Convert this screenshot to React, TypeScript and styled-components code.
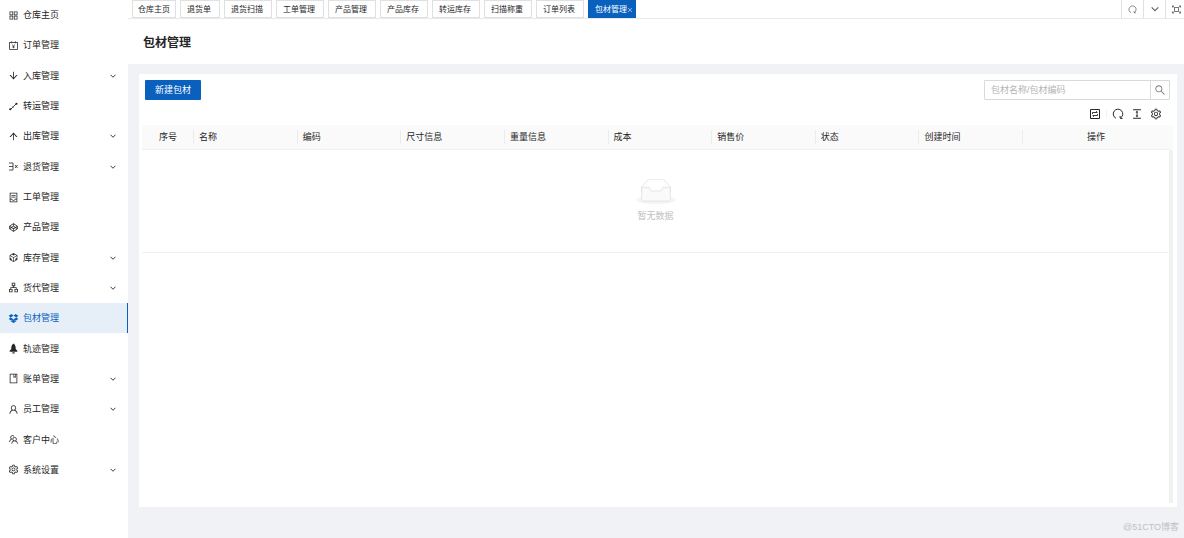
import React from "react";
import styled, { createGlobalStyle, css } from "styled-components";
import {
  AiOutlineAppstore, AiOutlineAccountBook, AiOutlineArrowDown, AiOutlineArrowUp,
  AiOutlineContainer, AiOutlineCodepen, AiOutlineCodeSandbox, AiOutlineApartment,
  AiOutlineDropbox, AiOutlineBook, AiOutlineUser, AiOutlineTeam, AiOutlineSetting,
  AiOutlineSearch, AiOutlineColumnHeight, AiOutlineClose,
} from "react-icons/ai";

const Global = createGlobalStyle`
  *, *::before, *::after { box-sizing: border-box; }
  body { margin: 0; background: #f0f2f5; color: #262626; }
  body, button, input { font-family: "Liberation Sans", "Noto Sans CJK SC", sans-serif; font-size: 9px; line-height: 14px; }
  h1, ul { margin: 0; padding: 0; }
  button { margin: 0; padding: 0; border: 0; background: none; color: inherit; cursor: pointer; }
  svg { display: block; flex: none; }
`;

const Shell = styled.div`
  display: grid;
  grid-template-columns: 128px minmax(0, 1fr);
  min-height: 100vh;
`;

const Sidebar = styled.nav`
  background: #fff;
  padding-bottom: 53px;
  display: flex;
`;

const Menu = styled.ul`
  flex: 1;
  list-style: none;
  display: grid;
  grid-auto-rows: minmax(30px, 1fr);
`;

const MenuItem = styled.li`
  display: grid;
`;

const MenuLink = styled.a<{ $active?: boolean }>`
  display: flex;
  align-items: center;
  gap: 4px;
  padding: 0 12px 0 8px;
  color: #262626;
  text-decoration: none;
  ${(p) => p.$active && css`
    color: #0960bd;
    background: #e6eff8;
    box-shadow: inset -1px 0 #0960bd;
  `}
`;

const MenuText = styled.span`
  flex: 1;
`;

const Main = styled.main`
  display: flex;
  flex-direction: column;
  min-width: 0;
`;

const TabBar = styled.div`
  display: flex;
  justify-content: space-between;
  height: 19px;
  background: #fff;
  border-bottom: 1px solid #e8e9eb;
`;

const Tabs = styled.div`
  display: flex;
  gap: 4px;
  padding-left: 4px;
`;

const Tab = styled.button<{ $home?: boolean; $active?: boolean }>`
  display: flex;
  align-items: center;
  height: 18px;
  padding: ${(p) => (p.$home ? "1px 5px 0" : "1px 8px 0 6px")};
  border: 1px solid #dfe0e2;
  font-size: 8px;
  line-height: 14px;
  white-space: nowrap;
  ${(p) => p.$active && css`
    padding-right: 2px;
    color: #fff;
    background: #0960bd;
    border-color: #0960bd;
  `}
`;

const TabActions = styled.div`
  display: flex;
  overflow: hidden;
`;

const TabAction = styled.button`
  display: grid;
  place-items: center;
  width: 22px;
  height: 18px;
  border-left: 1px solid #dfe0e2;
  color: #666;
  &:last-child { width: 19px; padding-left: 3px; }
`;

const PageHeader = styled.header`
  padding: 15px 15px 12px;
  background: #fff;
`;

const Title = styled.h1`
  font-size: 12px;
  line-height: 18px;
  font-weight: 700;
`;

const Panel = styled.section`
  flex: 1;
  display: flex;
  flex-direction: column;
  margin: 10px 7px 0 11px;
  padding: 6px 4px 4px 3px;
  background: #fff;
`;

const Toolbar = styled.div`
  display: flex;
  justify-content: space-between;
  padding: 0 3px;
`;

const PrimaryButton = styled.button`
  height: 20px;
  padding: 0 10px;
  color: #fff;
  background: #0960bd;
  border-radius: 1px;
`;

const Search = styled.form`
  display: flex;
  width: 186px;
  height: 20px;
  border: 1px solid #d9d9d9;
  border-radius: 1px;
`;

const SearchInput = styled.input`
  flex: 1;
  min-width: 0;
  padding: 0 6px;
  border: 0;
  outline: 0;
  &::placeholder { color: #b4b4b4; opacity: 1; }
`;

const SearchButton = styled.button`
  display: grid;
  place-items: center;
  width: 19px;
  border-left: 1px solid #d9d9d9;
  color: #777;
`;

const TableTools = styled.div`
  display: flex;
  justify-content: flex-end;
  align-items: center;
  gap: 7px;
  height: 25px;
  padding: 2px 11px 0 0;
`;

const ToolDivider = styled.span`
  width: 1px;
  height: 8px;
  margin: 0 -2px;
  background: #f0f0f0;
`;

const TableHead = styled.div`
  padding-right: 4px;
  background: #fafafa;
`;

const DataTable = styled.table`
  width: 100%;
  table-layout: fixed;
  border-collapse: collapse;
`;

const HeadCell = styled.th<{ $width?: string; $center?: boolean }>`
  position: relative;
  width: ${(p) => p.$width ?? "auto"};
  height: 24px;
  padding: 0 5px;
  font-weight: 400;
  text-align: ${(p) => (p.$center ? "center" : "left")};
  border-bottom: 1px solid #f0f0f0;
  &:not(:last-child)::after {
    content: "";
    position: absolute;
    top: 5px;
    bottom: 5px;
    right: 0;
    width: 1px;
    background: #ececec;
  }
`;

const TableBody = styled.div`
  flex: 1;
  border-right: 4px solid #f1f1f1;
`;

const Empty = styled.div`
  display: flex;
  flex-direction: column;
  align-items: center;
  gap: 4px;
  padding: 29px 0;
  color: #bfbfbf;
  border-bottom: 1px solid #f0f0f0;
`;

const Footer = styled.footer`
  padding: 13px 5px 4px;
  text-align: right;
  color: #bfc0c3;
`;

const ChevronIcon = ({ size = 6 }: { size?: number }) => (
  <svg width={size} height={size} viewBox="0 0 12 12" fill="none" stroke="currentColor" strokeWidth="1.8">
    <path d="m1 3.5 5 5 5-5" />
  </svg>
);

const TransferIcon = () => (
  <svg width="11" height="11" viewBox="0 0 22 22" fill="none" stroke="currentColor" strokeWidth="1.8">
    <path d="M5 17 9 13M11 11l6-6" />
    <circle cx="4.5" cy="16.5" r="2.2" fill="currentColor" stroke="none" />
    <circle cx="10" cy="12" r="1.6" fill="currentColor" stroke="none" />
    <circle cx="17" cy="5.5" r="2.2" fill="currentColor" stroke="none" />
  </svg>
);

const ReturnIcon = () => (
  <svg width="11" height="11" viewBox="0 0 22 22" fill="none" stroke="currentColor" strokeWidth="1.6">
    <path d="M2 4h8v14H2M2 11h8M14 8l5 6M19 8l-5 6" />
  </svg>
);

const TrackIcon = () => (
  <svg width="11" height="11" viewBox="0 0 20 20" fill="currentColor">
    <path d="M10 1c3 2 4 5 4 8v2l3 3v2H3v-2l3-3V9c0-3 1-6 4-8ZM8 17h4v2H8Z" />
  </svg>
);

const FullIcon = () => (
  <svg width="9" height="9" viewBox="0 0 18 18" fill="none" stroke="currentColor" strokeWidth="1.8">
    <path d="M5 5h8v8H5ZM1 5V2h3M14 2h3v3M17 13v3h-3M4 16H1v-3M1 2l4 3M17 2l-4 3M17 16l-4-3M1 16l4-3" />
  </svg>
);

const RedoIcon = ({ size }: { size: number }) => (
  <svg width={size} height={size} viewBox="0 0 24 24" fill="none" stroke="currentColor" strokeWidth="2">
    <path d="M8 20.5A9.5 9.5 0 1 1 17 20" />
    <path d="m16 16 .5 4.5 4.500.5" />
  </svg>
);

const LoopIcon = () => (
  <svg width="12" height="12" viewBox="0 0 24 24" fill="none" stroke="currentColor" strokeWidth="2">
    <path d="M3 3h18v18H3Z" />
    <path d="M7 12V9h9M14 6.500 17 9M17 12v3H8M10 17.500 7 15" strokeWidth="1.8" />
  </svg>
);

const EmptyIcon = () => (
  <svg width="40" height="26" viewBox="0 0 64 41">
    <ellipse cx="32" cy="33" rx="32" ry="7" fill="#f5f5f5" />
    <g stroke="#d9d9d9" fillRule="nonzero">
      <path d="M55 12.76 44.854 1.258C44.367.474 43.656 0 42.907 0H21.093c-.749 0-1.46.474-1.947 1.257L9 12.761V22h46v-9.24z" fill="#fff" />
      <path d="M41.613 15.931c0-1.605.994-2.93 2.227-2.931H55v18.137C55 33.26 53.68 35 52.05 35h-40.1C10.32 35 9 33.259 9 31.137V13h11.16c1.233 0 2.227 1.323 2.227 2.928v.022c0 1.605 1.005 2.901 2.237 2.901h14.752c1.232 0 2.237-1.308 2.237-2.913v-.007z" fill="#fafafa" />
    </g>
  </svg>
);

type Entry = { label: string; Icon: React.ComponentType<{ size?: number }>; sub?: boolean };

const menu: Entry[] = [
  { label: "仓库主页", Icon: AiOutlineAppstore },
  { label: "订单管理", Icon: AiOutlineAccountBook },
  { label: "入库管理", Icon: AiOutlineArrowDown, sub: true },
  { label: "转运管理", Icon: TransferIcon },
  { label: "出库管理", Icon: AiOutlineArrowUp, sub: true },
  { label: "退货管理", Icon: ReturnIcon, sub: true },
  { label: "工单管理", Icon: AiOutlineContainer },
  { label: "产品管理", Icon: AiOutlineCodepen },
  { label: "库存管理", Icon: AiOutlineCodeSandbox, sub: true },
  { label: "货代管理", Icon: AiOutlineApartment, sub: true },
  { label: "包材管理", Icon: AiOutlineDropbox },
  { label: "轨迹管理", Icon: TrackIcon },
  { label: "账单管理", Icon: AiOutlineBook, sub: true },
  { label: "员工管理", Icon: AiOutlineUser, sub: true },
  { label: "客户中心", Icon: AiOutlineTeam },
  { label: "系统设置", Icon: AiOutlineSetting, sub: true },
];

const tabs = ["仓库主页", "退货单", "退货扫描", "工单管理", "产品管理", "产品库存", "转运库存", "扫描称重", "订单列表", "包材管理"];
const columns = ["名称", "编码", "尺寸信息", "重量信息", "成本", "销售价", "状态", "创建时间"];
const current = "包材管理";

export default function App() {
  return (
    <>
      <Global />
      <Shell>
        <Sidebar>
          <Menu>
            {menu.map(({ label, Icon, sub }) => (
              <MenuItem key={label}>
                <MenuLink href="#" $active={label === current}>
                  <Icon size={11} />
                  <MenuText>{label}</MenuText>
                  {sub && <ChevronIcon />}
                </MenuLink>
              </MenuItem>
            ))}
          </Menu>
        </Sidebar>
        <Main>
          <TabBar>
            <Tabs>
              {tabs.map((label, i) => (
                <Tab key={label} type="button" $home={i === 0} $active={label === current}>
                  {label}
                  {label === current && <AiOutlineClose size={6} />}
                </Tab>
              ))}
            </Tabs>
            <TabActions>
              <TabAction type="button" aria-label="刷新"><RedoIcon size={9} /></TabAction>
              <TabAction type="button" aria-label="更多"><ChevronIcon size={8} /></TabAction>
              <TabAction type="button" aria-label="全屏"><FullIcon /></TabAction>
            </TabActions>
          </TabBar>
          <PageHeader>
            <Title>包材管理</Title>
          </PageHeader>
          <Panel>
            <Toolbar>
              <PrimaryButton type="button">新建包材</PrimaryButton>
              <Search>
                <SearchInput aria-label="包材名称/包材编码" placeholder="包材名称/包材编码" />
                <SearchButton type="button" aria-label="搜索"><AiOutlineSearch size={12} /></SearchButton>
              </Search>
            </Toolbar>
            <TableTools>
              <button type="button" aria-label="循环"><LoopIcon /></button>
              <ToolDivider />
              <button type="button" aria-label="刷新"><RedoIcon size={12} /></button>
              <button type="button" aria-label="密度"><AiOutlineColumnHeight size={12} /></button>
              <button type="button" aria-label="列设置"><AiOutlineSetting size={12} /></button>
            </TableTools>
            <TableHead>
              <DataTable>
                <thead>
                  <tr>
                    <HeadCell $width="52px" $center>序号</HeadCell>
                    {columns.map((c) => <HeadCell key={c}>{c}</HeadCell>)}
                    <HeadCell $width="146px" $center>操作</HeadCell>
                  </tr>
                </thead>
              </DataTable>
            </TableHead>
            <TableBody>
              <Empty>
                <EmptyIcon />
                暂无数据
              </Empty>
            </TableBody>
          </Panel>
          <Footer>@51CTO博客</Footer>
        </Main>
      </Shell>
    </>
  );
}
